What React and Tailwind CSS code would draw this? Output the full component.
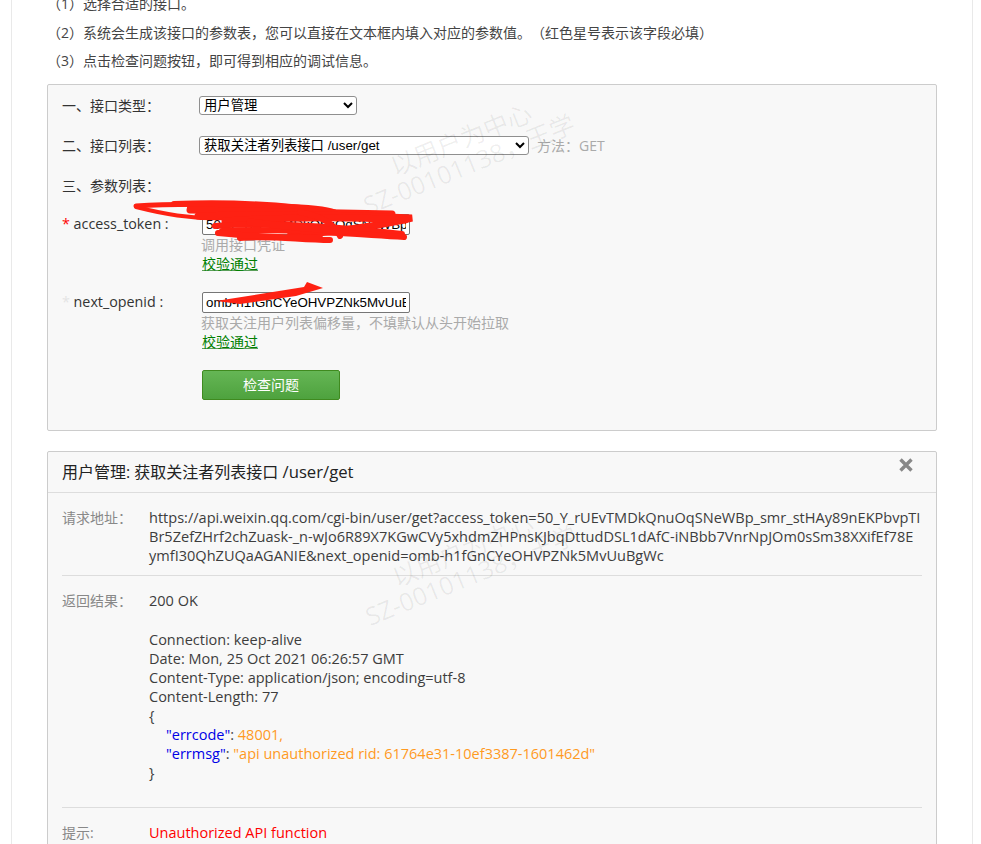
const sans = { fontFamily: '"Open Sans", "Noto Sans CJK SC", sans-serif' };
const ctl = { fontFamily: '"Liberation Sans", "Noto Sans CJK SC", sans-serif' };

function Watermark({ dx, dy }) {
  return (
    <div className="absolute left-0 top-0 w-full pointer-events-none text-[rgba(0,0,0,0.065)] whitespace-nowrap z-10" style={{ transform: `translate(${dx}px, ${dy}px)` }}>
      <div className="absolute left-[396px] top-[154px] text-[25px] leading-none origin-bottom-left -rotate-[22deg]">以用户为中心</div>
      <div className="absolute left-[369px] top-[193px] text-[25px] leading-none origin-bottom-left -rotate-[22deg]">SZ-00101138，王学</div>
    </div>
  );
}

function Scribble() {
  const strokes = [
    ["M136 207 C160 213 190 220 232 218", 4],
    ["M136 206 C180 203 230 204 300 207 C320 208 335 210 338 214", 5],
    ["M174 204 C230 202 290 205 336 213 C280 211 230 208 190 207", 6],
    ["M190 210 C240 211 310 212 392 214", 7],
    ["M198 216 C260 214 340 215 412 218 C380 226 330 232 290 236", 7],
    ["M225 221 C290 217 350 217 405 220", 7],
    ["M215 226 C270 222 330 226 402 234", 6],
    ["M222 231 C270 228 320 232 404 237", 6],
    ["M240 238 C270 235 300 240 330 240", 6],
    ["M250 222 C280 226 300 228 345 231", 7],
    ["M218 233 C250 236 280 238 320 238", 6],
    ["M300 212 C320 216 335 224 340 236", 6],
  ];
  return (
    <svg className="absolute left-0 top-0 z-20 pointer-events-none" width="981" height="844" viewBox="0 0 981 844" fill="none">
      {strokes.map(([d, w], i) => (
        <path key={i} d={d} stroke="#fe2113" strokeWidth={w} strokeLinecap="round" />
      ))}
      <path d="M216 301 L304 287 L307 282 L323 288 L296 296 L240 304 Z" fill="#fe2113" />
    </svg>
  );
}

function Param({ star, name, value, hint, mb }) {
  return (
    <div className={`flex ${mb}`}>
      <div className="w-[140px] shrink-0 text-[14.3px] leading-[20px] text-[#333]">
        <span className={star ? "text-[#f00]" : "text-[#e4e4e4]"}>*</span> {name} :
      </div>
      <div>
        <input
          readOnly
          value={value}
          style={ctl}
          className="block w-[208px] h-[21px] bg-white border border-[#767676] rounded-[2px] px-[3px] text-[13.33px] text-black outline-none"
        />
        <div className="-ml-px text-[14px] leading-[19px] text-[#aaa]">{hint}</div>
        <div className="text-[14px] leading-[19px] text-[#008000] underline underline-offset-1 decoration-[#5a9f5a]">校验通过</div>
      </div>
    </div>
  );
}

function Row({ label, children }) {
  return (
    <div className="flex text-[14.5px] leading-[19px]">
      <div className="w-[87px] shrink-0 text-[#888] text-[14px]">{label}</div>
      <div className="min-w-0">{children}</div>
    </div>
  );
}

export default function App() {
  return (
    <div className="relative h-[844px] w-[981px] overflow-hidden bg-white text-[#333] [text-spacing-trim:space-all]" style={sans}>
      <div className="mx-[11px] w-[962px] h-[855px] border-x border-[#e9e9e9] px-[35px] -mt-[11px]">
        <div className="text-[14px] leading-[28.5px] text-[#444] pt-[1px]">
          <p>（1）选择合适的接口。</p>
          <p>（2）系统会生成该接口的参数表，您可以直接在文本框内填入对应的参数值。（红色星号表示该字段必填）</p>
          <p>（3）点击检查问题按钮，即可得到相应的调试信息。</p>
        </div>

        <section className="mt-[8px] h-[347px] w-[890px] border border-[#ccc] rounded-[2px] bg-[#f8f8f8] px-[14px] pt-[11px]">
          <div className="flex items-center h-[20px] text-[14px]">
            <div className="w-[137px] shrink-0">一、接口类型：</div>
            <select style={ctl} className="w-[158px] h-[19px] bg-white border border-[#8f8f8f] rounded-[3px] text-[13.33px] text-black appearance-auto">
              <option>用户管理</option>
            </select>
          </div>
          <div className="flex items-center h-[20px] mt-[20px] text-[14px]">
            <div className="w-[137px] shrink-0">二、接口列表：</div>
            <select style={ctl} className="w-[330px] h-[19px] bg-white border border-[#8f8f8f] rounded-[3px] text-[13.33px] text-black appearance-auto">
              <option>获取关注者列表接口 /user/get</option>
            </select>
            <span className="ml-[8px] text-[#aaa]">方法：GET</span>
          </div>
          <div className="h-[20px] mt-[20px] text-[14px] leading-[20px]">三、参数列表：</div>

          <div className="mt-[18px]">
            <Param star name="access_token" value="50_Y_rUEvTMDkQnuOqSNeWBp_smr_stHAy89nEKPbvpTI" hint="调用接口凭证" mb="mb-[19px]" />
            <Param name="next_openid" value="omb-h1fGnCYeOHVPZNk5MvUuBgWc" hint="获取关注用户列表偏移量，不填默认从头开始拉取" mb="mb-[19px]" />
          </div>
          <button className="ml-[140px] block w-[138px] h-[30px] rounded-[2px] border border-[#3f8a1f] bg-gradient-to-b from-[#65b655] to-[#4ea23e] text-white text-[14px]">
            检查问题
          </button>
        </section>

        <section className="mt-[20px] w-[890px] h-[600px] border border-[#ccc] rounded-[2px] bg-[#f8f8f8]">
          <header className="relative h-[41px] border-b border-[#ddd] px-[14px] flex items-center text-[16px] text-[#222]">
            <span>用户管理: 获取关注者列表接口 <span className="text-[16.7px]">/user/get</span></span>
            <svg className="absolute right-[22px] top-[5px]" width="16" height="16" viewBox="0 0 16 16">
              <path d="M2.5 2.5 L13.5 13.5 M13.5 2.5 L2.5 13.5" stroke="#888" strokeWidth="3.4" />
            </svg>
          </header>
          <div className="px-[14px] pt-[15px]">
            <Row label="请求地址：">
              <div className="w-[775px] text-[#3d3d3d] text-[14.55px]">
                <div>https://api.weixin.qq.com/cgi-bin/user/get?access_token=50_Y_rUEvTMDkQnuOqSNeWBp_smr_stHAy89nEKPbvpTI</div>
                <div>Br5ZefZHrf2chZuask-_n-wJo6R89X7KGwCVy5xhdmZHPnsKJbqDttudDSL1dAfC-iNBbb7VnrNpJOm0sSm38XXifEf78E</div>
                <div>ymfI30QhZUQaAGANIE&amp;next_openid=omb-h1fGnCYeOHVPZNk5MvUuBgWc</div>
              </div>
            </Row>
            <div className="h-px bg-[#ddd] mt-[10px] mb-[15px]" />
            <Row label="返回结果：">
              <div className="text-[#3d3d3d]">
                <div>200 OK</div>
                <div className="h-[20px]" />
                <div>Connection: keep-alive</div>
                <div>Date: Mon, 25 Oct 2021 06:26:57 GMT</div>
                <div>Content-Type: application/json; encoding=utf-8</div>
                <div>Content-Length: 77</div>
                <div>{"{"}</div>
                <div className="pl-[17px]">
                  <span className="text-[#0000e6]">"errcode"</span>: <span className="text-[#ff9a1f]">48001,</span>
                </div>
                <div className="pl-[17px]">
                  <span className="text-[#0000e6]">"errmsg"</span>: <span className="text-[#ff9a1f]">"api unauthorized rid: 61764e31-10ef3387-1601462d"</span>
                </div>
                <div>{"}"}</div>
              </div>
            </Row>
            <div className="h-px bg-[#ddd] mt-[25px] mb-[15px]" />
            <Row label="提示:">
              <div className="text-[#f00]">Unauthorized API function</div>
            </Row>
          </div>
        </section>
      </div>
      <Watermark dx={0} dy={0} />
      <Watermark dx={2} dy={411} />
      <Scribble />
    </div>
  );
}
